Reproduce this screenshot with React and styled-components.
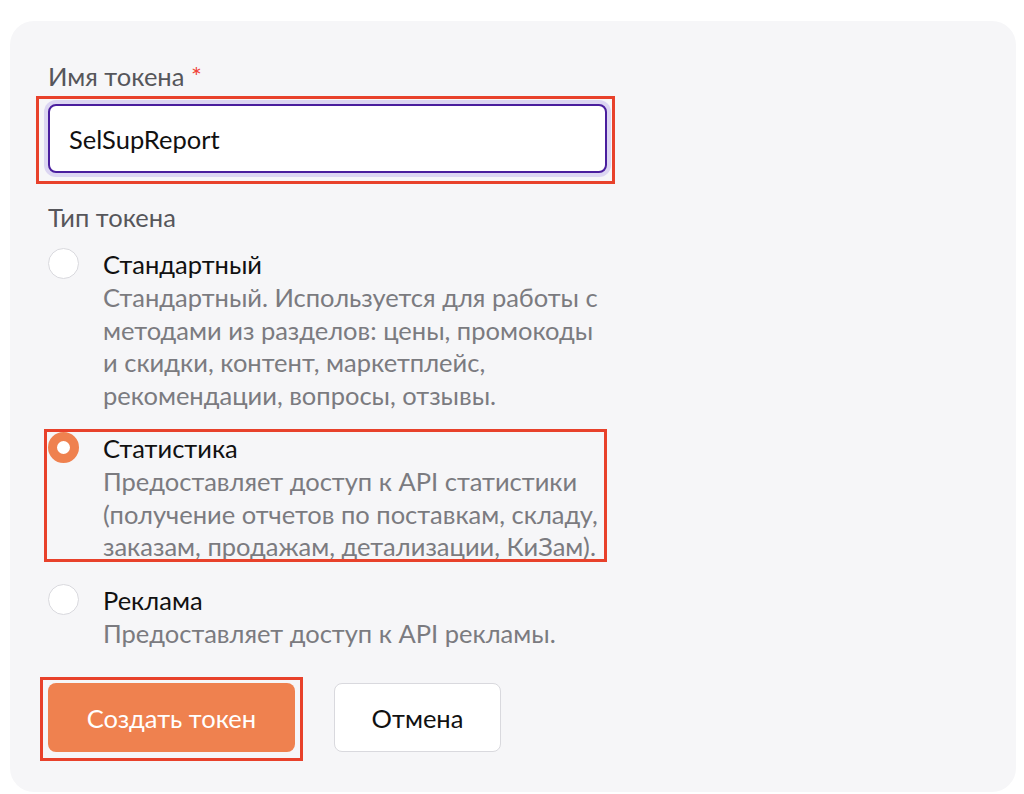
import React, { useState } from 'react';
import styled, { createGlobalStyle } from 'styled-components';

const options = [
  {
    id: 'standard',
    title: 'Стандартный',
    text: 'Стандартный. Используется для работы с методами из разделов: цены, промокоды и скидки, контент, маркетплейс, рекомендации, вопросы, отзывы.',
  },
  {
    id: 'stats',
    title: 'Статистика',
    text: 'Предоставляет доступ к API статистики (получение отчетов по поставкам, складу, заказам, продажам, детализации, КиЗам).',
    marked: true,
  },
  {
    id: 'ads',
    title: 'Реклама',
    text: 'Предоставляет доступ к API рекламы.',
  },
];

const App = () => {
  const [name, setName] = useState('SelSupReport');
  const [type, setType] = useState('stats');

  return (
    <>
      <GlobalStyle />
      <Page>
        <Card>
          <Field>
            <Label>
              Имя токена <Required>*</Required>
            </Label>
            <Marked $top={8} $right={8} $bottom={11} $left={12}>
              <Input autoFocus value={name} onChange={(e) => setName(e.target.value)} />
            </Marked>
          </Field>

          <Field>
            <Label $gap={15}>Тип токена</Label>
            <Options>
              {options.map((opt) => {
                const row = (
                  <Option key={opt.id} onClick={() => setType(opt.id)}>
                    <Radio $checked={type === opt.id} />
                    <OptionBody>
                      <OptionTitle>{opt.title}</OptionTitle>
                      <OptionText>{opt.text}</OptionText>
                    </OptionBody>
                  </Option>
                );
                return opt.marked ? (
                  <Marked key={opt.id} $top={3} $right={0} $bottom={-1} $left={4}>
                    {row}
                  </Marked>
                ) : (
                  row
                );
              })}
            </Options>
          </Field>

          <Actions>
            <Marked $top={6} $right={8} $bottom={9} $left={8}>
              <PrimaryButton>Создать токен</PrimaryButton>
            </Marked>
            <SecondaryButton>Отмена</SecondaryButton>
          </Actions>
        </Card>
      </Page>
    </>
  );
};

export default App;

const GlobalStyle = createGlobalStyle`
  body {
    margin: 0;
    background: #ffffff;
    font-family: Lato, "Noto Sans", sans-serif;
  }
`;

const Page = styled.div`
  padding: 21px 8px 2px 10px;
`;

const Card = styled.div`
  background: #f6f6f8;
  border-radius: 24px;
  min-height: 771px;
  box-sizing: border-box;
  padding: 39px 38px 0;
  display: flex;
  flex-direction: column;
`;

const Field = styled.div`
  display: flex;
  flex-direction: column;
  width: 559px;
  margin-bottom: 28px;
`;

const Label = styled.div`
  font-size: 25.5px;
  line-height: 32px;
  color: #56565b;
  margin-bottom: ${(p) => p.$gap ?? 12}px;
`;

const Required = styled.span`
  color: #f0443a;
`;

const Marked = styled.div`
  position: relative;

  &::after {
    content: '';
    position: absolute;
    top: ${(p) => -p.$top}px;
    right: ${(p) => -p.$right}px;
    bottom: ${(p) => -p.$bottom}px;
    left: ${(p) => -p.$left}px;
    border: 3px solid #e8412b;
    pointer-events: none;
  }
`;

const Input = styled.input`
  display: block;
  width: 100%;
  box-sizing: border-box;
  height: 69px;
  padding: 0 19px;
  border: 2px solid #4a1e9e;
  border-radius: 8px;
  box-shadow: 0 0 0 4px #dcd6f2;
  background: #fff;
  font-family: Lato, "Noto Sans", sans-serif;
  font-size: 25.5px;
  color: #111;
  caret-color: #111;
  outline: none;
`;

const Options = styled.div`
  display: flex;
  flex-direction: column;
  gap: 21px;
`;

const Option = styled.div`
  display: flex;
  gap: 23px;
  cursor: pointer;
`;

const Radio = styled.span`
  flex: none;
  width: 31px;
  height: 31px;
  box-sizing: border-box;
  border-radius: 50%;
  background: #fff;
  border: ${(p) => (p.$checked ? '9px solid #ef814f' : '1px solid #d9d9de')};
`;

const OptionBody = styled.div`
  flex: none;
  width: 502px;
  display: flex;
  flex-direction: column;
  margin-left: 1px;
`;

const OptionTitle = styled.div`
  font-size: 25.5px;
  line-height: 33px;
  color: #111;
`;

const OptionText = styled.div`
  font-size: 25.5px;
  line-height: 32.5px;
  color: #7b7b80;
`;

const Actions = styled.div`
  display: flex;
  gap: 39px;
  margin-top: 6px;
`;

const Button = styled.button`
  height: 69px;
  border-radius: 8px;
  font-family: Lato, "Noto Sans", sans-serif;
  font-size: 25.5px;
  cursor: pointer;
`;

const PrimaryButton = styled(Button)`
  display: block;
  width: 247px;
  border: none;
  background: #ef814f;
  color: #fff;
`;

const SecondaryButton = styled(Button)`
  width: 167px;
  border: 1px solid #d9d9de;
  background: #fff;
  color: #111;
`;
